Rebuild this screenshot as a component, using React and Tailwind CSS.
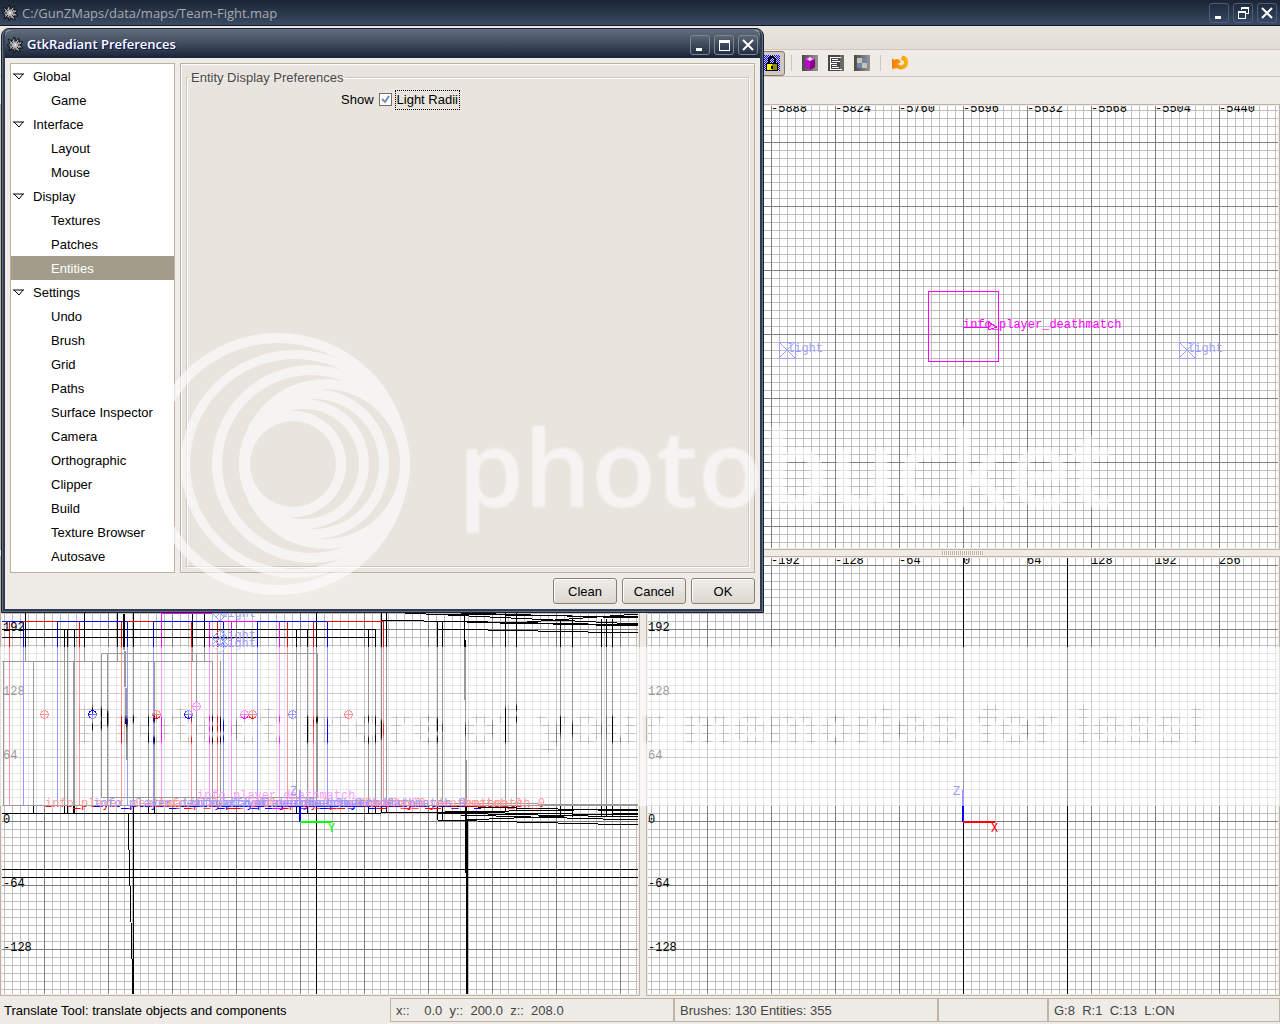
import React from "react";

const tree = [
  ["Global", ["Game"]],
  ["Interface", ["Layout", "Mouse"]],
  ["Display", ["Textures", "Patches", "Entities"]],
  [
    "Settings",
    ["Undo", "Brush", "Grid", "Paths", "Surface Inspector", "Camera", "Orthographic", "Clipper", "Build", "Texture Browser", "Autosave"],
  ],
];

function RadiantIcon() {
  return (
    <svg viewBox="0 0 16 16" className="size-4 shrink-0" aria-hidden="true">
      <path
        d="M7 0l2 4 3-3 0 4 4 0-3 3 3 3-4 0 1 4-4-2-2 3-1-4-4 2 1-4-3-2 3-2-2-4 4 2z"
        fill="#a4a6a8"
        stroke="#0c1018"
        strokeWidth="1"
      />
      <path d="M3 3l10 10M13 3L3 13M8 1v14M1 8h14" stroke="#15181e" strokeWidth="1" />
      <circle cx="8" cy="8" r="3" fill="#b4b6b8" />
      <circle cx="8" cy="8" r="1" fill="#ececec" />
    </svg>
  );
}

function CaptionButton({ label, light, children }) {
  return (
    <button
      aria-label={label}
      className={
        light
          ? "grid size-5 place-items-center rounded-[3px] border border-[#7b8795] bg-gradient-to-b from-[#5b6776] via-[#3c4859] to-[#253044]"
          : "grid size-5 place-items-center rounded-[3px] border border-[#4d5f78] bg-gradient-to-b from-[#1f2b3d] to-[#364864]"
      }
    >
      <svg viewBox="0 0 14 14" className="size-3.5" shapeRendering="crispEdges" fill="none" aria-hidden="true">
        {children}
      </svg>
    </button>
  );
}

const minimize = <rect x="3" y="10" width="6" height="3" fill="#fff" />;
const close = (
  <path d="M2 2l10 10M12 2L2 12" stroke="#fff" strokeWidth="2" shapeRendering="geometricPrecision" />
);

const V = ({ x, a, b, c = "#000", w = 1 }) => <rect x={x} y={a} width={w} height={b - a} fill={c} />;
const H = ({ y, a, b, c = "#000" }) => <rect x={a} y={y} width={b - a} height="1" fill={c} />;

const steps = [0, 8, 16, 24, 32, 40, 48, 56];

/* Orthographic viewport: an 8-unit minor grid and a 64-unit major grid under the scene. */
function Viewport({ id, label, ox, oy, gx, gy, children }) {
  return (
    <div className="min-h-0 min-w-0 border border-[#c0b3a6] bg-[#efebe6] p-px">
      <svg
        role="img"
        aria-label={label}
        className="block h-full w-full bg-white [font-family:'Liberation_Mono',monospace] text-[12px]"
        shapeRendering="crispEdges"
      >
        <defs>
          <pattern id={id} x={gx} y={gy} width="64" height="64" patternUnits="userSpaceOnUse">
            {steps.map((s) => (
              <g key={s} fill="#bfbfbf">
                <rect x={s} y="0" width="1" height="64" />
                <rect x="0" y={s} width="64" height="1" />
              </g>
            ))}
            <rect width="1" height="64" fill="#7f7f7f" />
            <rect width="64" height="1" fill="#7f7f7f" />
          </pattern>
        </defs>
        <g transform={`translate(${-ox} ${-oy})`}>
          <rect x="0" y="0" width="3000" height="3000" fill={`url(#${id})`} />
          {children}
        </g>
      </svg>
    </div>
  );
}

const Light = ({ x, y }) => (
  <g>
    <g stroke="#9f9fff" fill="none">
      <path d={`M${x} ${y}h16v16h-16zM${x} ${y}l16 16M${x + 16} ${y}l-16 16`} />
    </g>
    <text x={x + 8} y={y + 10} fill="#9f9fff">light</text>
  </g>
);

/* Small lamp seen from the side: a diamond outline with its mid line. */
const Lamp = ({ x, y }) => (
  <path d={`M${x - 8} ${y}l8 -8l8 8l-8 8zM${x - 8} ${y}h16M${x - 4} ${y - 4}l8 8M${x + 4} ${y - 4}l-8 8`} stroke="#9f9fff" fill="none" />
);

const Target = ({ x, y, c }) => (
  <g fill={c}>
    <path d={`M${x - 1} ${y - 4}h3v1h-3zM${x - 1} ${y + 4}h3v1h-3zM${x - 4} ${y - 1}h1v3h-1zM${x + 4} ${y - 1}h1v3h-1z`} />
    <path d={`M${x - 3} ${y - 3}h2v1h-1v1h-1zM${x + 2} ${y - 3}h2v2h-1v-1h-1zM${x - 3} ${y + 2}h1v1h1v1h-2zM${x + 3} ${y + 2}h1v2h-2v-1h1z`} />
    <path d={`M${x - 3} ${y}h7v1h-7zM${x} ${y - 3}h1v7h-1z`} />
  </g>
);

const R = "#f00";
const B = "#00f";
const M = "#f0f";

function TopScene() {
  return (
    <>
      {[-5888, -5824, -5760, -5696, -5632, -5568, -5504, -5440].map((n) => (
        <text key={n} x={n + 6659} y="112">{n}</text>
      ))}
      <rect x="928" y="291" width="71" height="71" fill={M} />
      <rect x="929" y="292" width="69" height="69" fill="#fff" />
      <rect x="929" y="292" width="69" height="69" fill="url(#grid-xy)" />
      <path d="M963 327h26M988 322v8l9 -3z" stroke={M} fill="none" />
      <text x="963" y="328" fill={M}>info_player_deathmatch</text>
      <Light x={779} y={342} />
      <Light x={1179} y={342} />
    </>
  );
}

function FrontScene() {
  return (
    <>
      {[-192, -128, -64, 0, 64, 128, 192, 256].map((n) => (
        <text key={n} x={n + 963} y="564">{n}</text>
      ))}
      {[192, 128, 64, 0, -64, -128].map((n) => (
        <text key={n} x="648" y={823 - n}>{n}</text>
      ))}
      <V x={963} a={558} b={3000} />
      <V x={1067} a={558} b={3000} />
      <V x={962} a={790} b={822} c={B} w={2} />
      <rect x="963" y="821" width="32" height="2" fill={R} />
      <text x="953" y="795" fill={B}>Z</text>
      <text x="991" y="832" fill={R}>X</text>
    </>
  );
}

const blackVerticals = [
  [25, 558, 661], [84, 558, 661], [117, 558, 661], [133, 558, 3000], [192, 558, 661], [204, 558, 661],
  [316, 558, 3000], [64, 629, 813], [67, 629, 813], [74, 629, 813], [73, 661, 813], [296, 629, 813],
  [307, 629, 813], [368, 629, 813], [375, 629, 813], [381, 558, 813], [386, 613, 813], [437, 621, 820],
  [442, 621, 820], [464, 558, 700], [465, 640, 873], [466, 760, 3000], [467, 820, 3000], [505, 558, 811],
  [516, 558, 811], [560, 619, 817], [572, 619, 817], [601, 619, 817], [606, 619, 817], [612, 619, 817],
  [3, 661, 805], [33, 661, 813], [92, 661, 805], [107, 653, 805], [148, 661, 813], [154, 661, 813],
  [212, 661, 805], [196, 653, 805], [220, 661, 805], [317, 653, 797], [101, 653, 797],
];

const colorVerticals = [
  [9, R], [23, B], [57, B], [79, R], [121, R], [127, B], [153, B], [161, M], [191, R], [209, M], [217, R],
  [223, B], [231, M], [257, B], [279, M], [287, R], [313, R], [327, B], [383, R],
];

const slants = [
  [405, 613, 638, 624], [437, 614, 638, 617], [381, 620, 638, 626], [437, 621, 638, 625], [460, 613, 638, 618],
  [437, 629, 638, 633], [500, 624, 638, 614], [381, 813, 638, 809], [437, 806, 638, 811], [437, 813, 638, 817],
  [437, 820, 638, 825], [440, 821, 638, 813], [437, 812, 638, 815], [460, 815, 638, 820], [437, 803, 638, 805],
];

const targets = [
  [44, 714, R], [92, 714, B], [156, 714, R], [188, 714, B], [196, 706, M], [244, 714, M], [252, 714, R], [292, 714, B], [348, 714, R],
];

const names = [[45, R], [157, R], [245, M], [253, R], [349, R], [372, R], [93, B], [189, B], [221, B], [293, B]];

const dashes = [
  [73, R], [121, B], [169, B], [184, R], [217, B], [226, R], [233, R], [265, B], [273, M], [281, R],
  [320, B], [329, R], [338, R], [369, B], [377, R], [425, R], [434, R], [474, B],
];

function SideScene() {
  return (
    <>
      {blackVerticals.map(([x, a, b], i) => <V key={i} x={x} a={a} b={b} />)}
      {colorVerticals.map(([x, c]) => <V key={x} x={x} a={621} b={805} c={c} />)}
      <H y={621} a={2} b={383} c={B} />
      <H y={621} a={23} b={57} c={R} />
      <H y={621} a={127} b={153} c={R} />
      <H y={621} a={223} b={257} c={M} />
      <H y={621} a={327} b={383} c={R} />
      <H y={613} a={161} b={213} c={M} />
      <V x={161} a={613} b={661} c={M} />
      <H y={629} a={2} b={376} />
      <H y={629} a={437} b={464} />
      <H y={637} a={2} b={376} />
      <H y={653} a={101} b={318} />
      <H y={661} a={2} b={212} />
      <H y={797} a={101} b={318} />
      <H y={805} a={2} b={638} />
      <H y={813} a={2} b={381} />
      <H y={869} a={0} b={3000} />
      <H y={877} a={0} b={3000} />
      <g stroke="#000">
        <path d="M123 613L127 760M128 813L133 994M124 613L128 760" />
        {slants.map(([a, b, c, d], i) => <line key={i} x1={a} y1={b} x2={c} y2={d} />)}
      </g>
      <Lamp x={220} y={613} />
      <Lamp x={220} y={638} />
      <Lamp x={220} y={645} />
      <g fill="#9f9fff">
        <text x="220" y="617">light</text>
        <text x="220" y="639">light</text>
        <text x="220" y="647">light</text>
      </g>
      {targets.map(([x, y, c], i) => <Target key={i} x={x} y={y} c={c} />)}
      <text x="197" y="799" fill={M}>info_player_deathmatch</text>
      {names.map(([x, c]) => (
        <text key={x} x={x} y="807" fill={c}>info_player_deathmatch_0</text>
      ))}
      {dashes.map(([x, c]) => <H key={x} y={808} a={x} b={x + 7} c={c} />)}
      {[192, 128, 64, 0, -64, -128].map((n) => (
        <text key={n} x="3" y={823 - n}>{n}</text>
      ))}
      <V x={299} a={790} b={822} c={B} w={2} />
      <rect x="300" y="821" width="32" height="2" fill="#0f0" />
      <text x="290" y="795" fill={B}>Z</text>
      <text x="328" y="832" fill="#0f0">Y</text>
    </>
  );
}

function Splitter() {
  return (
    <div className="flex items-center justify-center">
      <div className="h-1 w-[42px] bg-[repeating-linear-gradient(90deg,#c0b3a6_0px,#c0b3a6_1px,#f8f6f3_1px,#f8f6f3_2px)]" />
    </div>
  );
}

function Toolbar() {
  return (
    <div className="flex h-[27px] items-center border-b border-[#cfc7bf] bg-[#efebe6] pl-[761px]">
      <button aria-label="Texture lock" className="grid h-[25px] w-6 place-items-center rounded-[3px] border border-[#867868] bg-[#d0c8c0] pr-0.5">
        <svg viewBox="0 0 16 16" className="size-4" shapeRendering="crispEdges" aria-hidden="true">
          <defs>
            <pattern id="dither" width="2" height="2" patternUnits="userSpaceOnUse">
              <rect width="2" height="2" fill="#d6d0ea" />
              <rect width="1" height="1" fill={B} />
              <rect x="1" y="1" width="1" height="1" fill={B} />
            </pattern>
          </defs>
          <rect width="16" height="16" fill="url(#dither)" />
          <path d="M4 9V4l2-3h4l2 3v5h-2V5L9 3H7L6 5v4z" fill="#000" />
          <rect x="2" y="8" width="12" height="8" fill="#000" />
          <rect x="3" y="9" width="5" height="6" fill="#ff0" />
          <rect x="8" y="9" width="5" height="6" fill="#948c00" />
          <rect x="7" y="11" width="2" height="3" fill="#000" />
        </svg>
      </button>
      <div className="ml-1.5 h-4 w-px bg-[#cfc7bf]" />
      <button aria-label="Entities" className="ml-[10px]">
        <svg viewBox="0 0 16 16" className="size-4" aria-hidden="true">
          <defs>
            <linearGradient id="shade">
              <stop offset="0" stopColor="#484848" />
              <stop offset="1" stopColor="#9c9890" />
            </linearGradient>
          </defs>
          <rect width="16" height="16" fill="url(#shade)" />
          <path d="M3 4l5-2 5 2v8l-5 3-5-3z" fill="#c000c8" />
          <path d="M8 6l5-2v8l-5 3z" fill="#820088" />
          <path d="M3 4l5-2 5 2-5 2z" fill="#f060f8" />
          <path d="M6 4h4M8 2v4" stroke="#fff" />
        </svg>
      </button>
      <button aria-label="Console" className="ml-[10px]">
        <svg viewBox="0 0 16 16" className="size-4" shapeRendering="crispEdges" aria-hidden="true">
          <rect width="16" height="16" fill="#484848" />
          <rect x="12" width="4" height="16" fill="#6c6a66" />
          <path d="M2 2h11v1H2zM4 4h6v1H4zM4 6h8v1H4zM2 8h7v1H2zM4 10h5v1H4zM4 12h7v1H4zM2 14h12v1H2zM2 2h1v12H2z" fill="#fff" />
        </svg>
      </button>
      <button aria-label="Texture browser" className="ml-[10px]">
        <svg viewBox="0 0 16 16" className="size-4" shapeRendering="crispEdges" aria-hidden="true">
          <rect width="16" height="16" fill="url(#shade)" />
          <rect x="3" y="3" width="10" height="10" fill="#cbc3b2" />
          <path d="M8 3h5v5H8zM3 8h5v5H3z" fill="#6f84ae" />
        </svg>
      </button>
      <div className="ml-[10px] h-4 w-px bg-[#cfc7bf]" />
      <button aria-label="Refresh models" className="ml-[10px]">
        <svg viewBox="0 0 18 16" className="h-4 w-[18px]" aria-hidden="true">
          <defs>
            <linearGradient id="orange">
              <stop offset="0" stopColor="#ff7a00" />
              <stop offset="1" stopColor="#f8b818" />
            </linearGradient>
          </defs>
          <path
            d="M1 3l2 2c3-2 6-1 7 2l-3 2c2 2 5 2 6-1 0-2-1-3-3-3l1-4c4-1 7 3 6 8-1 5-7 7-11 4l-5 1z"
            fill="url(#orange)"
          />
        </svg>
      </button>
    </div>
  );
}

function Preferences() {
  return (
    <section
      aria-label="GtkRadiant Preferences"
      className="absolute left-px top-7 flex h-[585px] w-[763px] flex-col rounded-t-lg border border-[#1a2231] bg-[#5f6e80] p-px"
    >
      <div className="flex min-h-0 flex-1 flex-col rounded-t-md border-2 border-t-0 border-[#2f3b51] bg-[#efebe6]">
        <header className="flex h-7 shrink-0 items-center gap-1 rounded-t-md bg-gradient-to-b from-[#5f6c7a] via-[#3f4c5d] to-[#1b2437] pl-0.5 pr-0.5 pt-0.5">
          <RadiantIcon />
          <h1 className="flex-1 [font-family:'Open_Sans',sans-serif] text-[13px] font-semibold text-white [text-shadow:1px_1px_0_#101060]">
            GtkRadiant Preferences
          </h1>
          <div className="flex gap-1">
            <CaptionButton label="Minimize" light>{minimize}</CaptionButton>
            <CaptionButton label="Maximize" light>
              <path d="M2 2h11v11H2zM3 5v7h9V5z" fill="#fff" fillRule="evenodd" />
            </CaptionButton>
            <CaptionButton label="Close" light>{close}</CaptionButton>
          </div>
        </header>
        <div className="flex min-h-0 flex-1 gap-[5px] px-[5px] pt-[5px]">
          <nav aria-label="Preference pages" className="w-[165px] shrink-0 border border-[#bdb1a4] bg-white">
            <ul>
              {tree.map(([group, items]) => (
                <li key={group}>
                  <button className="flex h-6 w-full items-center gap-[9px] pl-0.5 pt-0.5 text-left">
                    <svg viewBox="0 0 11 7" className="mb-0.5 h-[7px] w-[11px]" aria-hidden="true">
                      <path d="M0 1h11M1 1l5 5 4-5" fill="none" stroke="#000" />
                    </svg>
                    {group}
                  </button>
                  <ul>
                    {items.map((item) => (
                      <li key={item}>
                        <button
                          className={
                            item === "Entities"
                              ? "h-6 w-full bg-[#a29d8b] pl-10 pt-0.5 text-left text-white"
                              : "h-6 w-full pl-10 pt-0.5 text-left"
                          }
                        >
                          {item}
                        </button>
                      </li>
                    ))}
                  </ul>
                </li>
              ))}
            </ul>
          </nav>
          <div className="flex min-w-0 flex-1 border border-[#bdb1a4] bg-[#e9e4de] p-px shadow-[inset_1px_1px_0_#fff]">
            <fieldset className="mx-1 mb-1 mt-[3px] min-w-0 flex-1 border border-[#cfc7bf] shadow-[1px_1px_0_#fff,inset_1px_1px_0_#fff]">
              <legend className="ml-0.5 px-0.5 text-[#4a4a4a]">Entity Display Preferences</legend>
              <div className="flex items-center pl-[154px] pt-0.5">
                <span id="show-label">Show</span>
                <input
                  id="light-radii"
                  type="checkbox"
                  defaultChecked
                  aria-describedby="show-label"
                  className="ml-[5px] size-[13px] appearance-none border border-[#6e6e6e] bg-white"
                />
                <svg viewBox="0 0 9 9" className="pointer-events-none relative -ml-[11px] size-[9px]" aria-hidden="true">
                  <path d="M1 4l3 3 4-6" fill="none" stroke="#6f93ad" strokeWidth="2" />
                </svg>
                <label htmlFor="light-radii" className="ml-[5px] h-5 border border-dotted border-black px-px leading-[18px]">
                  Light Radii
                </label>
              </div>
            </fieldset>
          </div>
        </div>
        <footer className="flex justify-end gap-[5px] px-[5px] pb-[5px] pt-[5px]">
          {["Clean", "Cancel", "OK"].map((b) => (
            <button key={b} className="h-[26px] w-16 rounded-[3px] border border-[#8c7f72] bg-gradient-to-b from-[#efece8] to-[#ddd7d0] pt-0.5 shadow-[inset_1px_1px_0_#fff]">
              {b}
            </button>
          ))}
        </footer>
      </div>
    </section>
  );
}

const rings = [
  [278, 131, 121],
  [295, 114, 105],
  [311, 99, 89],
  [325, 85, 75],
  [314, 75, 65],
  [304, 65, 55],
  [293, 53, 43],
];

function Watermark() {
  return (
    <svg className="pointer-events-none absolute inset-0 h-full w-full" role="img" aria-label="photobucket">
      <defs>
        <mask id="swirl" maskUnits="userSpaceOnUse" x="140" y="330" width="280" height="270">
          {rings.map(([cx, outer, inner]) => (
            <g key={cx}>
              <circle cx={cx} cy="464" r={outer} fill="#fff" />
              <circle cx={cx} cy="464" r={inner} fill="#000" />
            </g>
          ))}
        </mask>
        <mask id="slogan" maskUnits="userSpaceOnUse" x="0" y="640" width="3000" height="180">
          <rect x="0" y="640" width="3000" height="180" fill="#fff" />
          <text x="76" y="743" fill="#000" className="[font-family:'DejaVu_Sans',sans-serif] text-[50px] font-bold blur-[1px]">
            Protect more of your memories for less!
          </text>
        </mask>
      </defs>
      <g fill="#fff" fillOpacity="0.6">
        <rect x="140" y="330" width="280" height="270" mask="url(#swirl)" />
        <text x="458" y="507" className="[font-family:'Open_Sans',sans-serif] text-[106px] font-semibold blur-[1px]">photobucket</text>
        <rect x="0" y="647" width="3000" height="159" mask="url(#slogan)" />
      </g>
    </svg>
  );
}

export default function App() {
  return (
    <div className="relative flex h-screen min-h-[700px] flex-col overflow-hidden bg-[#efebe6] [font-family:'Liberation_Sans',Arial,sans-serif] text-[13px] text-black">
      <header className="flex h-[26px] shrink-0 items-center gap-1 border-b border-[#10182a] bg-gradient-to-b from-[#1a2535] to-[#3b4b64] pl-0.5 pr-[3px]">
        <RadiantIcon />
        <div className="flex-1 pt-0.5 [font-family:'Open_Sans',sans-serif] text-[13px] font-medium text-[#a9aaac]">
          C:/GunZMaps/data/maps/Team-Fight.map
        </div>
        <div className="flex gap-1">
          <CaptionButton label="Minimize window">{minimize}</CaptionButton>
          <CaptionButton label="Restore window">
            <path d="M5 1h8v7h-3V7h2V3H6v1H5zM2 5h8v8H2zM3 7v5h6V7z" fill="#fff" fillRule="evenodd" />
          </CaptionButton>
          <CaptionButton label="Close window">{close}</CaptionButton>
        </div>
      </header>
      <div className="h-6 shrink-0 border-b border-[#cfc7bf] bg-gradient-to-b from-[#e9e5e0] to-[#e2dcd5]" />
      <Toolbar />
      <div className="h-[27px] shrink-0" />
      <main className="flex min-h-0 flex-1 gap-1.5">
        <div className="grid w-1/2 grid-rows-[446fr_6px_440fr]">
          <div className="border border-[#c0b3a6]" />
          <Splitter />
          <Viewport id="grid-yz" label="YZ side view" ox={2} oy={558} gx={44} gy={53}>
            <SideScene />
          </Viewport>
        </div>
        <div className="grid min-w-0 flex-1 grid-rows-[446fr_6px_440fr]">
          <Viewport id="grid-xy" label="XY top view" ox={648} oy={106} gx={3} gy={14}>
            <TopScene />
          </Viewport>
          <Splitter />
          <Viewport id="grid-xz" label="XZ front view" ox={648} oy={558} gx={3} gy={53}>
            <FrontScene />
          </Viewport>
        </div>
      </main>
      <footer className="mt-0.5 flex h-[26px] shrink-0 pb-0.5 text-[#444] *:pt-0.5">
        <div className="flex w-[390px] items-center pl-1 text-black">Translate Tool: translate objects and components</div>
        <div className="flex w-[284px] items-center whitespace-pre border border-[#c0b3a6] pl-[5px]">x::    0.0  y::  200.0  z::  208.0</div>
        <div className="flex w-[264px] items-center border border-[#c0b3a6] pl-[5px]">Brushes: 130 Entities: 355</div>
        <div className="w-[110px] border border-[#c0b3a6]" />
        <div className="flex flex-1 items-center whitespace-pre border border-[#c0b3a6] pl-[5px]">G:8  R:1  C:13  L:ON</div>
      </footer>
      <Preferences />
      <Watermark />
    </div>
  );
}
